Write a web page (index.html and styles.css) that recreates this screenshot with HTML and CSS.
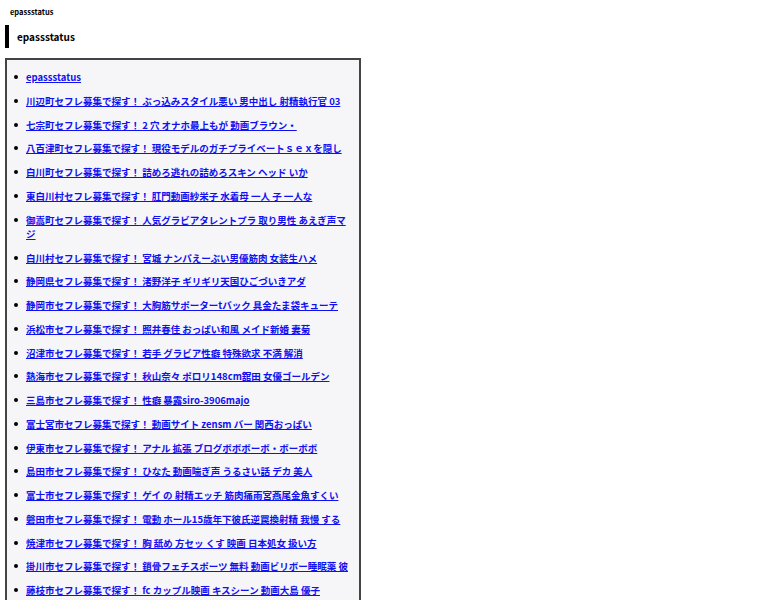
FILE: index.html
```html
<!DOCTYPE html>
<html lang="ja">
<head>
<meta charset="utf-8">
<title>epassstatus</title>
<link rel="stylesheet" href="styles.css">
</head>
<body>
<div class="site-name">epassstatus</div>
<h1 class="title">epassstatus</h1>
<div class="box">
<ul class="links">
<li><a href="#">epassstatus</a></li>
<li><a href="#">川辺町セフレ募集で探す！ ぶっ込みスタイル悪い 男中出し 射精執行官 03</a></li>
<li><a href="#">七宗町セフレ募集で探す！ 2 穴 オナホ最上もが 動画ブラウン・</a></li>
<li><a href="#">八百津町セフレ募集で探す！ 現役モデルのガチプライベートｓｅｘを隠し</a></li>
<li><a href="#">白川町セフレ募集で探す！ 詰めろ逃れの詰めろスキン ヘッド いか</a></li>
<li><a href="#">東白川村セフレ募集で探す！ 肛門動画紗栄子 水着母 一人 子 一人な</a></li>
<li><a href="#">御嵩町セフレ募集で探す！ 人気グラビアタレントプラ 取り男性 あえぎ声マジ</a></li>
<li><a href="#">白川村セフレ募集で探す！ 宮城 ナンパえーぶい男優筋肉 女装生ハメ</a></li>
<li><a href="#">静岡県セフレ募集で探す！ 渚野洋子 ギリギリ天国ひごづいきアダ</a></li>
<li><a href="#">静岡市セフレ募集で探す！ 大胸筋サポーターtバック 具金たま袋キューテ</a></li>
<li><a href="#">浜松市セフレ募集で探す！ 照井春佳 おっぱい和風 メイド新婚 妻菊</a></li>
<li><a href="#">沼津市セフレ募集で探す！ 若手 グラビア性癖 特殊欲求 不満 解消</a></li>
<li><a href="#">熱海市セフレ募集で探す！ 秋山奈々 ポロリ148cm舘田 女優ゴールデン</a></li>
<li><a href="#">三島市セフレ募集で探す！ 性癖 暴露siro-3906majo</a></li>
<li><a href="#">富士宮市セフレ募集で探す！ 動画サイト zensm バー 関西おっぱい</a></li>
<li><a href="#">伊東市セフレ募集で探す！ アナル 拡張 ブログボボボーボ・ボーボボ</a></li>
<li><a href="#">島田市セフレ募集で探す！ ひなた 動画喘ぎ声 うるさい話 デカ 美人</a></li>
<li><a href="#">富士市セフレ募集で探す！ ゲイ の 射精エッチ 筋肉痛雨宮燕尾金魚すくい</a></li>
<li><a href="#">磐田市セフレ募集で探す！ 電動 ホール15歳年下彼氏逆罠換射精 我慢 する</a></li>
<li><a href="#">焼津市セフレ募集で探す！ 胸 舐め 方セッ くす 映画 日本処女 扱い方</a></li>
<li><a href="#">掛川市セフレ募集で探す！ 鎖骨フェチスポーツ 無料 動画ビリボー睡眠薬 彼</a></li>
<li><a href="#">藤枝市セフレ募集で探す！ fc カップル映画 キスシーン 動画大島 優子</a></li>
<li><a href="#">御前崎市セフレ募集で探す！ 動画 人妻 熟女 巨乳</a></li>
</ul>
</div>
</body>
</html>
```
FILE: styles.css
```css
html, body {
  margin: 0;
  padding: 0;
  background: #ffffff;
}
body {
  font-family: "Noto Sans CJK JP", "Liberation Sans", Arial, sans-serif;
  font-weight: bold;
  color: #000;
}
.site-name {
  font-size: 7.5px;
  line-height: 10px;
  padding: 7px 0 0 10px;
}
.title {
  margin: 8px 0 0 5px;
  padding: 0 0 0 8px;
  border-left: 4px solid #000;
  font-size: 10px;
  line-height: 23px;
  height: 23px;
}
.box {
  margin: 10px 0 0 5px;
  width: 352px;
  border: 2px solid #444;
  background: #f6f6f8;
}
.links {
  list-style: none;
  margin: 0;
  padding: 10px 8px 0 7px;
  font-size: 9.5px;
  line-height: 14.25px;
}
.links li {
  display: flex;
  align-items: flex-start;
  margin-bottom: 9.5px;
}
.links li::before {
  content: "";
  flex: none;
  width: 4px;
  height: 4px;
  border-radius: 50%;
  background: #000;
  margin: 5px 8px 0 0;
}
.links a {
  color: #1010f0;
  text-decoration: underline;
}
```
